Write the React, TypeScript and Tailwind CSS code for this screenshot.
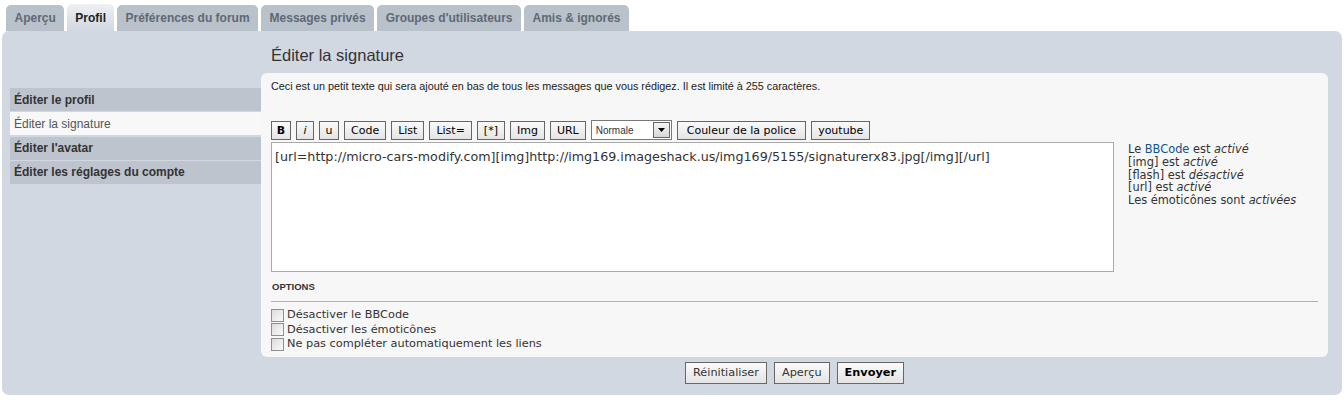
import React from 'react'

const tabs = [
	{ label: 'Aperçu', active: false },
	{ label: 'Profil', active: true },
	{ label: 'Préférences du forum', active: false },
	{ label: 'Messages privés', active: false },
	{ label: "Groupes d'utilisateurs", active: false },
	{ label: 'Amis & ignorés', active: false },
]

const menu = [
	{ label: 'Éditer le profil', active: false },
	{ label: 'Éditer la signature', active: true },
	{ label: "Éditer l'avatar", active: false },
	{ label: 'Éditer les réglages du compte', active: false },
]

const toolbar = ['B', 'i', 'u', 'Code', 'List', 'List=', '[*]', 'Img', 'URL']

const options = [
	'Désactiver le BBCode',
	'Désactiver les émoticônes',
	'Ne pas compléter automatiquement les liens',
]

const arial = "font-['Liberation_Sans',Arial,sans-serif]"
const verdana = "font-['DejaVu_Sans',Verdana,sans-serif]"

function ToolButton({ label }: { label: string }) {
	const extra =
		label === 'B'
			? 'font-bold w-[20px]'
			: label === 'i'
				? 'italic w-[18px]'
				: label === 'u'
					? 'w-[20px]'
					: label === 'Couleur de la police'
						? 'px-[9px]'
						: 'px-[6px]'
	return (
		<button
			className={`h-[19px] border border-[#666] bg-gradient-to-b from-[#fafafa] to-[#e4e4e4] text-[11px] leading-none text-[#000] flex items-center justify-center ${extra}`}
		>
			{label}
		</button>
	)
}

export default function App() {
	return (
		<div className={`w-[1344px] h-[400px] bg-white ${arial}`}>
			{/* tabs */}
			<div className="flex items-end gap-[3px] pl-[6px] pt-[4px] h-[31px]">
				{tabs.map((tab) => (
					<div
						key={tab.label}
						className={
							tab.active
								? 'h-[27px] px-[8px] rounded-t-[5px] bg-gradient-to-b from-[#eef0f3] to-[#d2d8e1] text-[12px] font-bold text-[#222] flex items-center'
								: 'h-[26px] px-[8.5px] rounded-t-[5px] bg-[#b9c1ca] text-[12px] font-bold text-[#5f6976] flex items-center'
						}
					>
						{tab.label}
					</div>
				))}
			</div>

			{/* panel */}
			<div className="mx-[2px] h-[364px] rounded-[7px] bg-[#d1d8e2] flex">
				<div className="w-[259px] pl-[8px] pt-[57px] shrink-0">
					<ul className="flex flex-col">
						{menu.map((item) => (
							<li
								key={item.label}
								className={
									item.active
										? 'h-[23px] mb-[1.33px] bg-[#f8f8f8] pl-[4px] flex items-center text-[12px] text-[#555]'
										: 'h-[23px] mb-[1.33px] bg-[#bdc4ce] pl-[4px] flex items-center text-[12px] font-bold text-[#333]'
								}
							>
								{item.label}
							</li>
						))}
					</ul>
				</div>

				<div className="w-[1067px] flex flex-col">
					<h2 className="h-[42px] pl-[10px] pt-[14px] text-[16.5px] leading-[20px] text-[#333] font-normal">
						Éditer la signature
					</h2>

					<div className="h-[284px] rounded-[6px] bg-[#f7f7f7] px-[10px] pt-[6px] flex flex-col">
						<p className="text-[10.8px] leading-[14px] text-[#222]">
							Ceci est un petit texte qui sera ajouté en bas de tous les messages que vous rédigez. Il est limité à 255
							caractères.
						</p>

						<div className={`mt-[27px] flex items-center gap-[5px] ${verdana}`}>
							{toolbar.map((t) => (
								<ToolButton key={t} label={t} />
							))}
							<div className={`h-[20px] w-[81px] border border-[#777] bg-white flex items-center justify-between pl-[4px] pr-[1px] ${arial}`}>
								<span className="text-[10px] text-[#333]">Normale</span>
								<span className="h-[16px] w-[17px] border border-[#666] bg-gradient-to-b from-[#f4f4f4] to-[#d8d8d8] flex items-center justify-center">
									<svg width="7" height="4" viewBox="0 0 7 4">
										<path d="M0 0h7L3.5 4z" fill="#000" />
									</svg>
								</span>
							</div>
							<ToolButton label="Couleur de la police" />
							<ToolButton label="youtube" />
						</div>

						<div className="mt-[2px] flex">
							<div
								className={`w-[843px] h-[130px] border border-[#aaa] bg-white px-[3px] pt-[6px] text-[12.7px] leading-[16px] text-[#333] whitespace-nowrap ${verdana}`}
							>
								[url=http://micro-cars-modify.com][img]http://img169.imageshack.us/img169/5155/signaturerx83.jpg[/img][/url]
							</div>
							<div className={`pl-[14px] pt-[1px] text-[11.4px] leading-[12.75px] text-[#333] ${verdana}`}>
								<div>
									Le <span className="text-[#105289]">BBCode</span> est <em>activé</em>
								</div>
								<div>
									[img] est <em>activé</em>
								</div>
								<div>
									[flash] est <em>désactivé</em>
								</div>
								<div>
									[url] est <em>activé</em>
								</div>
								<div>
									Les émoticônes sont <em>activées</em>
								</div>
							</div>
						</div>

						<div className="mt-[9px] pl-[1px] text-[9.5px] font-bold text-[#333] leading-[12px]">OPTIONS</div>
						<div className="mt-[8px] h-px bg-[#b0b0b0]" />

						<div className={`mt-[6px] flex flex-col text-[11.3px] leading-[14.5px] text-[#333] ${verdana}`}>
							{options.map((o) => (
								<label key={o} className="flex items-center gap-[3px]">
									<span className="w-[13px] h-[13px] border border-[#8e8f8f] bg-gradient-to-br from-[#dcdcdc] to-[#fafafa]" />
									{o}
								</label>
							))}
						</div>
					</div>

					<div className={`mt-[5px] flex justify-center gap-[7px] text-[11.3px] ${verdana}`}>
						<button className="h-[22px] px-[7px] border border-[#666] bg-gradient-to-b from-[#fafafa] to-[#e4e4e4] text-[#333]">
							Réinitialiser
						</button>
						<button className="h-[22px] px-[7px] border border-[#666] bg-gradient-to-b from-[#fafafa] to-[#e4e4e4] text-[#333]">
							Aperçu
						</button>
						<button className="h-[22px] px-[7px] border border-[#666] bg-gradient-to-b from-[#fafafa] to-[#e4e4e4] font-bold text-[#000]">
							Envoyer
						</button>
					</div>
				</div>
			</div>
		</div>
	)
}
